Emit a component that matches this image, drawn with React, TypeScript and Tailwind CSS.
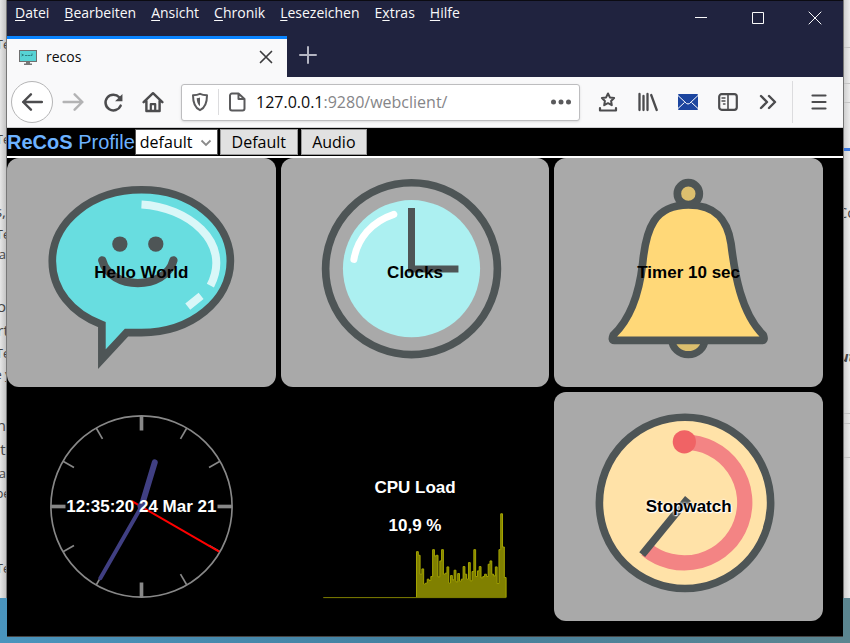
import React from "react";
import type { ReactNode } from "react";

const uiFont = "font-['Open_Sans','Noto_Sans',sans-serif]";
const pageFont = "font-['Liberation_Sans',Arial,sans-serif]";

const menus = [
  ["", "D", "atei"],
  ["", "B", "earbeiten"],
  ["", "A", "nsicht"],
  ["", "C", "hronik"],
  ["", "L", "esezeichen"],
  ["E", "x", "tras"],
  ["", "H", "ilfe"],
];

const cpuSamples = [
  277, 288, 345, 329, 375, 372, 360, 364, 352, 271, 290, 288, 353, 305, 271, 345, 342, 323, 372,
  349, 362, 333, 368, 343, 366, 360, 322, 345, 360, 310, 365, 337, 271, 352, 335, 322, 356, 352,
  345, 352, 315, 305, 345, 350, 323, 373, 271, 163, 263, 355,
];

function cpuPath() {
  const start = 350;
  const step = 270 / cpuSamples.length;
  let d = `M${start} 415`;
  cpuSamples.forEach((y, i) => {
    d += ` V${y} H${start + (i + 1) * step}`;
  });
  return d + " V415";
}

function Icon({ children, className = "size-5" }: { children: ReactNode; className?: string }) {
  return (
    <svg
      viewBox="0 0 20 20"
      className={className}
      fill="none"
      stroke="currentColor"
      strokeWidth="2.2"
      strokeLinecap="round"
      strokeLinejoin="round"
      aria-hidden="true"
    >
      {children}
    </svg>
  );
}

function ToolButton({ label, children, className = "size-10" }: { label: string; children: ReactNode; className?: string }) {
  return (
    <button aria-label={label} className={`flex shrink-0 items-center justify-center text-[#4c4c4e] ${className}`}>
      {children}
    </button>
  );
}

function Tile({ label, viewBox, children, className = "" }: { label: string; viewBox: string; children: ReactNode; className?: string }) {
  return (
    <button className={`relative flex items-center justify-center rounded-xl bg-[#a9a9a9] text-[17px] font-bold text-black ${className}`}>
      <svg viewBox={viewBox} className="absolute inset-0 h-full w-full" fill="none" aria-hidden="true">
        {children}
      </svg>
      <span className="relative">{label}</span>
    </button>
  );
}

function Display({ viewBox, art, children }: { viewBox: string; art: ReactNode; children: ReactNode }) {
  return (
    <section className="relative flex flex-col items-center justify-center gap-[19px] text-[17px] leading-[19px] font-bold text-white">
      <svg viewBox={viewBox} className="absolute inset-0 h-full w-full" fill="none" aria-hidden="true">
        {art}
      </svg>
      {children}
    </section>
  );
}

function TitleBar() {
  return (
    <header className="border-t border-[#0b0b12] bg-[#20233f] text-[#f9f9fa]">
      <div className="flex h-[35px] items-start justify-between">
        <nav className="flex gap-[15px] pl-2 pt-[2px] text-[14px] leading-5">
          {menus.map(([before, key, after]) => (
            <button key={key + after}>
              {before}
              <span className="underline underline-offset-2">{key}</span>
              {after}
            </button>
          ))}
        </nav>
        <div className="flex">
          <button aria-label="Minimieren" className="flex h-[34px] w-[57px] items-center justify-center">
            <svg viewBox="0 0 14 14" className="size-[14px]" stroke="currentColor" aria-hidden="true">
              <path d="M1 6.500h12" />
            </svg>
          </button>
          <button aria-label="Maximieren" className="flex h-[34px] w-[57px] items-center justify-center">
            <svg viewBox="0 0 14 14" className="size-[14px]" fill="none" stroke="currentColor" aria-hidden="true">
              <path d="M1.500 1.500h11v11h-11z" />
            </svg>
          </button>
          <button aria-label="Schließen" className="flex h-[34px] w-[57px] items-center justify-center">
            <svg viewBox="0 0 14 14" className="size-[14px]" stroke="currentColor" aria-hidden="true">
              <path d="M.7.7l12.600 12.600M13.300.7L.7 13.300" />
            </svg>
          </button>
        </div>
      </div>
      <div className="flex h-[41px]">
        <div className="flex w-[280px] items-center border-t-[3px] border-[#0a84ff] bg-[#f9f9fa] px-3 pb-[2px] text-[#0c0c0d]">
          <svg viewBox="0 0 18 15" className="h-[15px] w-[18px]" aria-hidden="true">
            <path d="M0 0h18v12H0z" fill="#6f6f6f" />
            <path d="M1 1h16v10H1z" fill="#57d3d5" />
            <path d="M2.500 4l2 1-2 1M6 5.500h2M8.500 5.500h2.500M11.500 5.500h1.500V3.500" fill="none" stroke="#2e7f82" strokeWidth="1" />
            <path d="M7 12h4v1.500h2V15H5v-1.500h2z" fill="#777" />
          </svg>
          <span className="flex-1 pl-[9px] text-[14px] leading-5">recos</span>
          <button aria-label="Tab schließen" className="flex size-[18px] items-center justify-center text-[#3c3c3e]">
            <svg viewBox="0 0 14 14" className="size-[14px]" stroke="currentColor" strokeWidth="1.700" strokeLinecap="round" aria-hidden="true">
              <path d="M1.500 1.500l11 11M12.500 1.500l-11 11" />
            </svg>
          </button>
        </div>
        <button aria-label="Neuer Tab" className="flex w-[42px] items-center justify-center pb-1 text-[#b4b5c2]">
          <svg viewBox="0 0 18 18" className="size-[18px]" stroke="currentColor" strokeWidth="2" strokeLinecap="round" aria-hidden="true">
            <path d="M9 1v16M1 9h16" />
          </svg>
        </button>
      </div>
    </header>
  );
}

function Toolbar() {
  return (
    <div className="flex h-[51px] shrink-0 items-center border-b border-[#cfcfd1] bg-[#f9f9fa] px-1">
      <ToolButton label="Zurück" className="size-[42px] rounded-full border border-[#b5b5b6] bg-white">
        <Icon className="size-[22px]"><path d="M19 10H2M9 3L2 10l7 7" /></Icon>
      </ToolButton>
      <ToolButton label="Vor" className="size-10 opacity-40">
        <Icon className="size-[22px]"><path d="M1.500 10h17M11.500 3l7 7-7 7" /></Icon>
      </ToolButton>
      <ToolButton label="Neu laden">
        <Icon className="size-[21px]">
          <path d="M16.800 13A7.500 7.500 0 1 1 15.500 5" strokeWidth="2.400" />
          <path d="M18.500 1.800v7h-7z" fill="currentColor" stroke="none" />
        </Icon>
      </ToolButton>
      <ToolButton label="Startseite">
        <Icon className="size-[22px]">
          <path d="M1.500 10.200L10 2l8.500 8.200M4 9v9.200h12V9" />
          <path d="M8 18v-6h4v6" strokeWidth="2" />
        </Icon>
      </ToolButton>
      <div className="ml-2 flex h-[37px] min-w-0 flex-1 items-center rounded-[3px] border border-[#bdbdbf] bg-white shadow-sm">
        <button aria-label="Schutz" className="flex w-9 shrink-0 items-center justify-center text-[#5a5a5c]">
          <Icon>
            <path d="M10 1.800c2 .9 4.300 1.300 7 1.400 0 7-1.500 12.500-7 15-5.500-2.500-7-8-7-15 2.700-.1 5-.5 7-1.400z" strokeWidth="2" />
            <path d="M10 5.500c-1 .4-2 .6-3.300.7.200 3.800 1.100 6.300 3.300 8z" fill="currentColor" stroke="none" />
          </Icon>
        </button>
        <span className="h-[26px] border-l border-[#dcdcde]" />
        <button aria-label="Seiteninformationen" className="flex w-9 shrink-0 items-center justify-center text-[#5a5a5c]">
          <Icon>
            <path d="M5 1.500h6.500L17.500 7v9.500a2 2 0 0 1-2 2H5a2 2 0 0 1-2-2v-13a2 2 0 0 1 2-2zM11.500 2v5h5.500" strokeWidth="2" />
          </Icon>
        </button>
        <p aria-label="Adresse" className="flex-1 pl-px text-[16px] whitespace-nowrap text-[#0c0c0d]">
          127.0.0.1<span className="text-[#858588]">:9280/webclient/</span>
        </p>
        <button aria-label="Seitenaktionen" className="flex w-9 shrink-0 items-center justify-center text-[#5a5a5c]">
          <Icon>
            <g fill="currentColor" stroke="none"><circle cx="2.500" cy="10" r="2.500" /><circle cx="10" cy="10" r="2.500" /><circle cx="17.500" cy="10" r="2.500" /></g>
          </Icon>
        </button>
      </div>
      <ToolButton label="Lesezeichen" className="ml-2 size-10">
        <Icon>
          <path d="M10 1.500l1.900 3.900 4.200.6-3 3 .7 4.200L10 11.200l-3.800 2 .7-4.200-3-3 4.200-.6z" strokeWidth="2" />
          <path d="M2 16v2.500h16V16" />
        </Icon>
      </ToolButton>
      <ToolButton label="Bibliothek">
        <Icon>
          <path d="M1.500 2v16M5.500 4v14M9.500 2v16" strokeWidth="2.300" />
          <path d="M13.200 3l5.500 15" strokeWidth="2.300" />
        </Icon>
      </ToolButton>
      <ToolButton label="Mail">
        <svg viewBox="0 0 20 16" className="h-4 w-5" aria-hidden="true">
          <rect width="20" height="16" rx="1" fill="#1c459f" />
          <path d="M0 1.500l8.500 8q1.500 1 3 0l8.500-8M0 14.500l6.500-6M20 14.500l-6.500-6" fill="none" stroke="#fff" strokeWidth="1" />
        </svg>
      </ToolButton>
      <ToolButton label="Seitenleiste">
        <Icon>
          <rect x="1.200" y="2.200" width="17.600" height="15.600" rx="2.500" />
          <path d="M10 2.500v15" strokeWidth="1.600" />
          <path d="M4 6h3M4 9h3M5.500 12h1.500" strokeWidth="1.400" />
        </Icon>
      </ToolButton>
      <ToolButton label="Weitere Werkzeuge">
        <Icon><path d="M3 4l6 6-6 6M11 4l6 6-6 6" strokeWidth="2.400" /></Icon>
      </ToolButton>
      <span className="mr-[6px] ml-1 h-[42px] border-l border-[#dcdcde]" />
      <ToolButton label="Menü">
        <Icon><path d="M3.500 3.500h13M3.500 10h13M3.500 16.500h13" /></Icon>
      </ToolButton>
    </div>
  );
}

const bigTicks = [0, 90, 180, 270];
const smallTicks = [30, 60, 120, 150, 210, 240, 300, 330];

function Profile() {
  return (
    <main className={`flex flex-1 flex-col bg-black ${pageFont}`}>
      <div className="flex h-[30px] shrink-0 items-start border-b-2 border-white pt-px">
        <label htmlFor="profile" className="text-[20px] leading-[26px] text-[#6cb2ff]">
          <b>ReCoS</b> Profile
        </label>
        <div className="relative">
          <select
            id="profile"
            defaultValue="default"
            className={`h-[26px] w-[83px] appearance-none border border-[#555] bg-white pl-1 text-[16px] leading-5 text-black ${uiFont}`}
          >
            <option>default</option>
          </select>
          <svg viewBox="0 0 12 8" className="pointer-events-none absolute top-[10px] right-[6px] h-2 w-3" fill="none" stroke="#8a8a8a" strokeWidth="1.800" aria-hidden="true">
            <path d="M1.500 1.500L6 6l4.500-4.500" />
          </svg>
        </div>
        <div className={`ml-[2px] flex gap-[3px] text-[16px] leading-5 text-black ${uiFont}`}>
          <button className="h-[26px] w-[78px] border border-[#9a9a9a] bg-[#e1e1e1]">Default</button>
          <button className="h-[26px] w-[66px] border border-[#9a9a9a] bg-[#e1e1e1]">Audio</button>
        </div>
      </div>

      <div className="mr-5 mb-[15px] grid flex-1 grid-cols-3 grid-rows-2 gap-[5px]">
        <Tile label="Hello World" viewBox="21 24 807 687">
          <path
            d="M425 119C575 119 692 215 692 333S575 548 425 548H380L306 628V524C214 490 157 418 157 333 157 215 275 119 425 119z"
            fill="#68dde0" stroke="#4e5556" strokeWidth="23"
          />
          <path d="M425 163C560 170 700 275 632 407M604 438l-40 32" stroke="#d9f7f8" strokeWidth="24" />
          <circle cx="360" cy="282" r="23" fill="#4e5556" />
          <circle cx="468" cy="282" r="23" fill="#4e5556" />
          <path d="M307 331C330 422 498 422 521 331" stroke="#4e5556" strokeWidth="25" strokeLinecap="round" />
        </Tile>

        <Tile label="Clocks" viewBox="18 24 807 687">
          <circle cx="410" cy="356" r="258" stroke="#4e5556" strokeWidth="23" />
          <circle cx="410" cy="356" r="206" fill="#acf0f1" />
          <path d="M237 328C248 265 290 215 357 193" stroke="#fff" strokeWidth="21" strokeLinecap="round" />
          <path d="M410 174V357H551" stroke="#4e5556" strokeWidth="21" />
        </Tile>

        <Tile label="Timer 10 sec" viewBox="15 24 804 687">
          <circle cx="417" cy="131" r="33" fill="#dcbf6e" stroke="#4e5556" strokeWidth="23" />
          <path d="M368 570a49 44 0 0 0 98 0z" fill="#dcbf6e" stroke="#4e5556" strokeWidth="22" />
          <path
            d="M417 165C505 165 535 215 545 280 556 370 575 490 642 555Q648 571 638 571H195Q185 571 192 555C250 500 272 410 280 340 290 235 315 165 417 165z"
            fill="#ffd878" stroke="#4e5556" strokeWidth="23" strokeLinejoin="round"
          />
        </Tile>

        <Display
          viewBox="21 6 807 690"
          art={
            <>
              <circle cx="425" cy="351" r="273" stroke="#888" strokeWidth="5" />
              {bigTicks.map((a) => (
                <path key={a} d="M425 78v44" stroke="#888" strokeWidth="11" transform={`rotate(${a} 425 351)`} />
              ))}
              {smallTicks.map((a) => (
                <path key={a} d="M425 78v38" stroke="#888" strokeWidth="5" transform={`rotate(${a} 425 351)`} />
              ))}
              <path d="M425 351L465 218" stroke="#403f82" strokeWidth="18" strokeLinecap="round" />
              <path d="M425 351L301 567" stroke="#403f82" strokeWidth="12" strokeLinecap="round" />
              <path d="M396 335L659 487" stroke="#f00" strokeWidth="6" />
              <circle cx="425" cy="351" r="12" fill="#403f82" />
            </>
          }
        >
          <time className="relative">12:35:20 24 Mar 21</time>
        </Display>

        <Display
          viewBox="-57 -204 807 690"
          art={
            <>
              <path d={cpuPath()} fill="#808000" stroke="#a5a500" strokeWidth="3" />
              <path d="M69 415.500H620" stroke="#808000" strokeWidth="3" />
            </>
          }
        >
          <h2 className="relative">CPU Load</h2>
          <p className="relative">10,9 %</p>
        </Display>

        <Tile
          label="Stopwatch"
          viewBox="15 21 804 690"
          className="[text-shadow:0_0_2px_#fff,0_0_3px_#fff,1px_1px_1px_#fff]"
        >
          <circle cx="407" cy="355" r="258" fill="#ffe2a8" stroke="#4e5556" strokeWidth="23" />
          <path d="M407 172A182 182 0 1 1 290 495" stroke="#f38484" strokeWidth="46" />
          <circle cx="405" cy="171" r="35" fill="#f06365" />
          <path d="M416 342L278 511" stroke="#4e5556" strokeWidth="23" />
        </Tile>
      </div>
    </main>
  );
}

const leftFragments = [
  { text: "Te", row: "h-[54px] justify-center" },
  { text: "Te", row: "h-[95px] justify-center" },
  { text: "s,", row: "h-[72px] justify-end text-[15px]" },
  { text: "Te", row: "h-[23px] justify-center" },
  { text: "a", row: "h-[20px] justify-end" },
  { text: "o", row: "h-[52px] justify-end text-[15px]" },
  { text: "rt", row: "h-[24px] justify-center text-[15px]" },
  { text: "Te", row: "h-[23px] justify-center" },
  { text: "e y", row: "h-[21px] justify-center" },
  { text: "n", row: "h-[51px] justify-end text-[15px]" },
  { text: "t", row: "h-[24px] justify-center text-[15px]" },
  { text: "a", row: "h-[24px] justify-end" },
  { text: "pe", row: "h-[20px] justify-center" },
  { text: "Te", row: "h-[75px] justify-center" },
];

export default function App() {
  return (
    <div className={`flex min-h-screen items-stretch overflow-hidden bg-linear-to-r from-[#4a94bd] via-[#43809f] to-[#5b8590] ${uiFont}`}>
      <aside className="mb-[45px] w-[7px] shrink-0 overflow-hidden border-r border-[#777] bg-linear-to-r from-[#e6e6e6] to-[#c4c4c4] text-[13px] leading-5 text-[#444]">
        {leftFragments.map((f, i) => (
          <div key={i} className={`flex items-end whitespace-nowrap ${f.row}`}>
            {f.text}
          </div>
        ))}
      </aside>
      <div className="mb-[6px] flex min-w-0 flex-1 flex-col border-b border-[#444]">
        <TitleBar />
        <Toolbar />
        <Profile />
      </div>
      <aside className="mb-[45px] flex w-[7px] shrink-0 flex-col overflow-hidden border-l border-[#777] bg-linear-to-r from-[#cfcfcf] to-[#ececec] text-[15px] leading-5 text-[#444]">
        <div className="h-[48px] border-b border-[#c4c4c4]" />
        <div className="h-[36px] border-b border-[#c4c4c4]" />
        <div className="h-[19px] border-b border-[#c4c4c4]" />
        <div className="h-[48px] border-b-[3px] border-[#3b78e0]" />
        <div className="flex h-[71px] items-end justify-center">Co</div>
        <div className="flex h-[144px] items-end justify-center font-bold italic">ut</div>
        <div className="h-[48px] border-b border-[#c4c4c4]" />
        <div className="h-[10px] border-b border-[#c4c4c4]" />
        <div className="h-[34px] border-b border-[#c4c4c4]" />
      </aside>
    </div>
  );
}
